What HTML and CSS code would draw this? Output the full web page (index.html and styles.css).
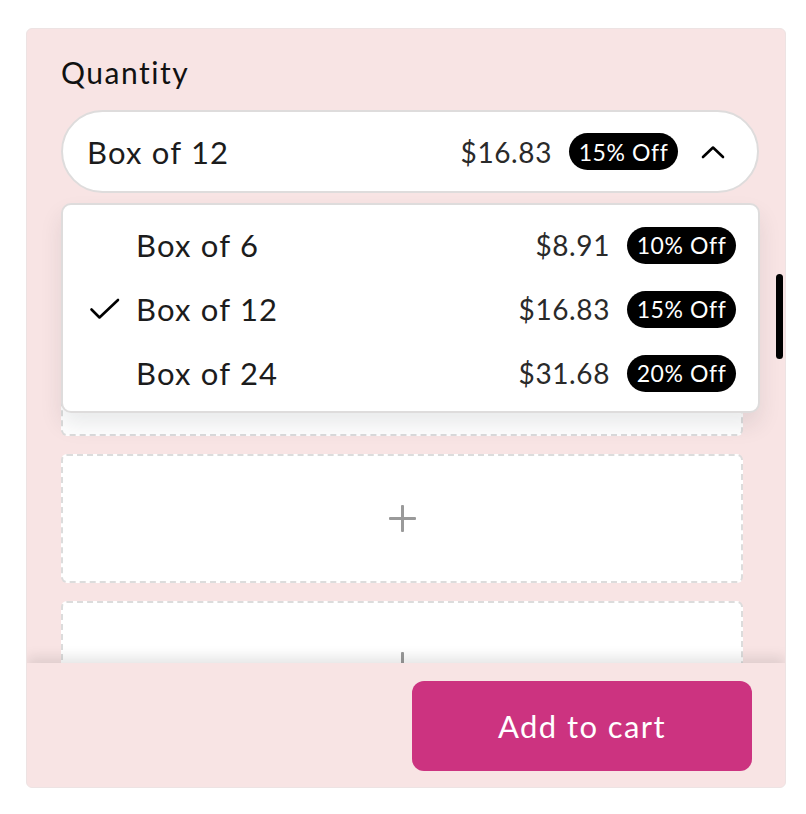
FILE: index.html
```html
<!DOCTYPE html>
<html>
<head>
<meta charset="utf-8">
<link rel="stylesheet" href="styles.css">
</head>
<body>
<div class="panel">
  <div class="header">
    <div class="label">Quantity</div>
    <div class="select">
      <span class="select-name">Box of 12</span>
      <span class="select-right">
        <span class="price">$16.83</span>
        <span class="badge">15% Off</span>
        <svg class="chev" width="24" height="14" viewBox="0 0 24 14"><path d="M2 12 L12 2.5 L22 12" fill="none" stroke="#000" stroke-width="2.6" stroke-linecap="round" stroke-linejoin="round"/></svg>
      </span>
    </div>
  </div>
  <div class="scroll">
    <div class="slot"></div>
    <div class="slot"><span class="plus"></span></div>
    <div class="slot"><span class="plus"></span></div>
  </div>
  <div class="thumb"></div>
  <div class="menu">
    <div class="opt">
      <span class="check"></span>
      <span class="opt-name">Box of 6</span>
      <span class="price">$8.91</span>
      <span class="badge">10% Off</span>
    </div>
    <div class="opt">
      <span class="check"><svg width="32" height="24" viewBox="0 0 32 24"><path d="M2.5 12.5 L10.5 20.5 L29 3" fill="none" stroke="#000" stroke-width="2.6" stroke-linecap="round" stroke-linejoin="round"/></svg></span>
      <span class="opt-name">Box of 12</span>
      <span class="price">$16.83</span>
      <span class="badge">15% Off</span>
    </div>
    <div class="opt">
      <span class="check"></span>
      <span class="opt-name">Box of 24</span>
      <span class="price">$31.68</span>
      <span class="badge">20% Off</span>
    </div>
  </div>
  <div class="footer">
    <button class="cart">Add to cart</button>
  </div>
</div>
</body>
</html>
```
FILE: styles.css
```css
* { box-sizing: border-box; }
body {
  margin: 0;
  background: #fff;
  font-family: "Lato", "Noto Sans", sans-serif;
  color: #111;
}
.panel {
  position: relative;
  margin: 28px 0 0 26px;
  width: 760px;
  height: 760px;
  background: #f8e4e4;
  border-radius: 6px;
  border: 1px solid #ede3e3;
  overflow: hidden;
  display: flex;
  flex-direction: column;
}
.header {
  padding: 24px 26px 0 34px;
}
.label {
  font-size: 30px;
  line-height: 38px;
  letter-spacing: 1.5px;
  color: #111;
}
.select {
  margin-top: 19px;
  height: 83px;
  background: #fff;
  border: 2px solid #dedcdc;
  border-radius: 42px;
  display: flex;
  align-items: center;
  justify-content: space-between;
  padding: 0 32px 0 24px;
}
.select-name {
  font-size: 31px;
  letter-spacing: 1.2px;
  color: #1c1c1c;
}
.select-right {
  display: flex;
  align-items: center;
}
.price {
  font-size: 28px;
  letter-spacing: 0.6px;
  color: #2a2a2a;
}
.badge {
  margin-left: 17px;
  height: 37px;
  width: 109px;
  border-radius: 19px;
  background: #000;
  color: #fff;
  font-size: 23px;
  letter-spacing: 0.6px;
  display: flex;
  align-items: center;
  justify-content: center;
}
.chev { margin-left: 23px; }
.scroll {
  flex: 1;
  overflow: hidden;
  padding: 114px 42px 0 34px;
  display: flex;
  flex-direction: column;
  gap: 18px;
}
.slot {
  flex: none;
  height: 129px;
  background: #fff;
  border: 2px dashed #dcdcdc;
  border-radius: 6px;
  display: flex;
  align-items: center;
  justify-content: center;
}
.plus {
  position: relative;
  width: 27px;
  height: 27px;
}
.plus::before, .plus::after {
  content: "";
  position: absolute;
  background: #9a9a9a;
  border-radius: 1px;
}
.plus::before { left: 12px; top: 0; width: 3px; height: 27px; }
.plus::after { top: 12px; left: 0; height: 3px; width: 27px; }
.thumb {
  position: absolute;
  left: 749px;
  top: 245px;
  width: 7px;
  height: 85px;
  border-radius: 4px;
  background: #000;
}
.menu {
  position: absolute;
  left: 34px;
  top: 174px;
  width: 699px;
  height: 210px;
  background: #fff;
  border: 2px solid #dedcdc;
  border-radius: 10px;
  box-shadow: 0 12px 22px rgba(40, 50, 60, 0.10);
  padding: 8px 22px 8px 26px;
}
.opt {
  height: 64px;
  display: flex;
  align-items: center;
}
.check {
  width: 47px;
  display: flex;
  align-items: center;
}
.opt-name {
  flex: 1;
  font-size: 31px;
  letter-spacing: 1.2px;
  color: #1c1c1c;
}
.footer {
  flex: none;
  height: 124px;
  background: #f8e4e4;
  box-shadow: 0 -6px 12px rgba(0, 0, 0, 0.10);
  display: flex;
  justify-content: flex-end;
  align-items: flex-start;
  padding: 18px 33px 0 0;
  position: relative;
}
.cart {
  width: 340px;
  height: 90px;
  border: none;
  border-radius: 12px;
  background: #cc3380;
  color: #fff;
  font-family: inherit;
  font-size: 31px;
  letter-spacing: 1.4px;
  cursor: pointer;
}
```
